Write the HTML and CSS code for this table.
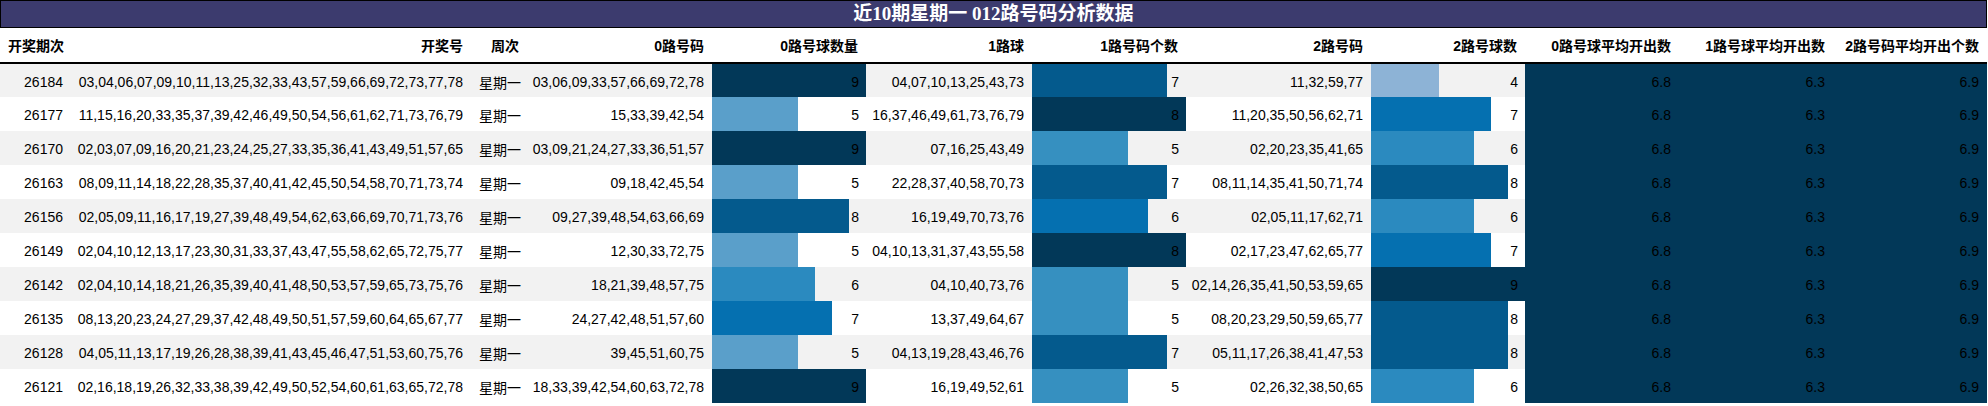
FILE: index.html
```html
<!DOCTYPE html>
<html lang="zh">
<head>
<meta charset="utf-8">
<title>近10期星期一 012路号码分析数据</title>
<link rel="stylesheet" href="styles.css">
</head>
<body>
<div class="sheet">
  <div class="title">近10期星期一 012路号码分析数据</div>
  <table class="data">
    <colgroup>
      <col class="w71"><col class="w400"><col class="w56"><col class="w185"><col class="w154"><col class="w166"><col class="w154"><col class="w185"><col class="w154"><col class="w154"><col class="w154"><col class="w154">
    </colgroup>
    <thead>
      <tr>
        <th class="left">开奖期次</th><th>开奖号</th><th>周次</th><th>0路号码</th><th>0路号球数量</th><th>1路球</th><th>1路号码个数</th><th>2路号码</th><th>2路号球数</th><th>0路号球平均开出数</th><th>1路号球平均开出数</th><th>2路号码平均开出个数</th>
      </tr>
    </thead>
    <tbody>
      <tr><td>26184</td><td>03,04,06,07,09,10,11,13,25,32,33,43,57,59,66,69,72,73,77,78</td><td class="left">星期一</td><td>03,06,09,33,57,66,69,72,78</td><td class="bar"><div class="fill a9" style="width:100%"></div><span>9</span></td><td>04,07,10,13,25,43,73</td><td class="bar"><div class="fill b7" style="width:87.5%"></div><span>7</span></td><td>11,32,59,77</td><td class="bar"><div class="fill c4" style="width:44.44%"></div><span>4</span></td><td class="avg">6.8</td><td class="avg">6.3</td><td class="avg">6.9</td></tr>
      <tr><td>26177</td><td>11,15,16,20,33,35,37,39,42,46,49,50,54,56,61,62,71,73,76,79</td><td class="left">星期一</td><td>15,33,39,42,54</td><td class="bar"><div class="fill a5" style="width:55.56%"></div><span>5</span></td><td>16,37,46,49,61,73,76,79</td><td class="bar"><div class="fill b8" style="width:100%"></div><span>8</span></td><td>11,20,35,50,56,62,71</td><td class="bar"><div class="fill c7" style="width:77.78%"></div><span>7</span></td><td class="avg">6.8</td><td class="avg">6.3</td><td class="avg">6.9</td></tr>
      <tr><td>26170</td><td>02,03,07,09,16,20,21,23,24,25,27,33,35,36,41,43,49,51,57,65</td><td class="left">星期一</td><td>03,09,21,24,27,33,36,51,57</td><td class="bar"><div class="fill a9" style="width:100%"></div><span>9</span></td><td>07,16,25,43,49</td><td class="bar"><div class="fill b5" style="width:62.5%"></div><span>5</span></td><td>02,20,23,35,41,65</td><td class="bar"><div class="fill c6" style="width:66.67%"></div><span>6</span></td><td class="avg">6.8</td><td class="avg">6.3</td><td class="avg">6.9</td></tr>
      <tr><td>26163</td><td>08,09,11,14,18,22,28,35,37,40,41,42,45,50,54,58,70,71,73,74</td><td class="left">星期一</td><td>09,18,42,45,54</td><td class="bar"><div class="fill a5" style="width:55.56%"></div><span>5</span></td><td>22,28,37,40,58,70,73</td><td class="bar"><div class="fill b7" style="width:87.5%"></div><span>7</span></td><td>08,11,14,35,41,50,71,74</td><td class="bar"><div class="fill c8" style="width:88.89%"></div><span>8</span></td><td class="avg">6.8</td><td class="avg">6.3</td><td class="avg">6.9</td></tr>
      <tr><td>26156</td><td>02,05,09,11,16,17,19,27,39,48,49,54,62,63,66,69,70,71,73,76</td><td class="left">星期一</td><td>09,27,39,48,54,63,66,69</td><td class="bar"><div class="fill a8" style="width:88.89%"></div><span>8</span></td><td>16,19,49,70,73,76</td><td class="bar"><div class="fill b6" style="width:75%"></div><span>6</span></td><td>02,05,11,17,62,71</td><td class="bar"><div class="fill c6" style="width:66.67%"></div><span>6</span></td><td class="avg">6.8</td><td class="avg">6.3</td><td class="avg">6.9</td></tr>
      <tr><td>26149</td><td>02,04,10,12,13,17,23,30,31,33,37,43,47,55,58,62,65,72,75,77</td><td class="left">星期一</td><td>12,30,33,72,75</td><td class="bar"><div class="fill a5" style="width:55.56%"></div><span>5</span></td><td>04,10,13,31,37,43,55,58</td><td class="bar"><div class="fill b8" style="width:100%"></div><span>8</span></td><td>02,17,23,47,62,65,77</td><td class="bar"><div class="fill c7" style="width:77.78%"></div><span>7</span></td><td class="avg">6.8</td><td class="avg">6.3</td><td class="avg">6.9</td></tr>
      <tr><td>26142</td><td>02,04,10,14,18,21,26,35,39,40,41,48,50,53,57,59,65,73,75,76</td><td class="left">星期一</td><td>18,21,39,48,57,75</td><td class="bar"><div class="fill a6" style="width:66.67%"></div><span>6</span></td><td>04,10,40,73,76</td><td class="bar"><div class="fill b5" style="width:62.5%"></div><span>5</span></td><td>02,14,26,35,41,50,53,59,65</td><td class="bar"><div class="fill c9" style="width:100%"></div><span>9</span></td><td class="avg">6.8</td><td class="avg">6.3</td><td class="avg">6.9</td></tr>
      <tr><td>26135</td><td>08,13,20,23,24,27,29,37,42,48,49,50,51,57,59,60,64,65,67,77</td><td class="left">星期一</td><td>24,27,42,48,51,57,60</td><td class="bar"><div class="fill a7" style="width:77.78%"></div><span>7</span></td><td>13,37,49,64,67</td><td class="bar"><div class="fill b5" style="width:62.5%"></div><span>5</span></td><td>08,20,23,29,50,59,65,77</td><td class="bar"><div class="fill c8" style="width:88.89%"></div><span>8</span></td><td class="avg">6.8</td><td class="avg">6.3</td><td class="avg">6.9</td></tr>
      <tr><td>26128</td><td>04,05,11,13,17,19,26,28,38,39,41,43,45,46,47,51,53,60,75,76</td><td class="left">星期一</td><td>39,45,51,60,75</td><td class="bar"><div class="fill a5" style="width:55.56%"></div><span>5</span></td><td>04,13,19,28,43,46,76</td><td class="bar"><div class="fill b7" style="width:87.5%"></div><span>7</span></td><td>05,11,17,26,38,41,47,53</td><td class="bar"><div class="fill c8" style="width:88.89%"></div><span>8</span></td><td class="avg">6.8</td><td class="avg">6.3</td><td class="avg">6.9</td></tr>
      <tr><td>26121</td><td>02,16,18,19,26,32,33,38,39,42,49,50,52,54,60,61,63,65,72,78</td><td class="left">星期一</td><td>18,33,39,42,54,60,63,72,78</td><td class="bar"><div class="fill a9" style="width:100%"></div><span>9</span></td><td>16,19,49,52,61</td><td class="bar"><div class="fill b5" style="width:62.5%"></div><span>5</span></td><td>02,26,32,38,50,65</td><td class="bar"><div class="fill c6" style="width:66.67%"></div><span>6</span></td><td class="avg">6.8</td><td class="avg">6.3</td><td class="avg">6.9</td></tr>
    </tbody>
  </table>
</div>
</body>
</html>
```
FILE: styles.css
```css
* { box-sizing: border-box; }
body {
  margin: 0;
  background: #ffffff;
  font-family: "Liberation Sans", "Noto Sans CJK SC", sans-serif;
  font-size: 14px;
  color: #000;
}
.sheet { width: 1987px; }
.title {
  height: 28px;
  background: #3c3b6e;
  border: 1px solid #000;
  color: #fff;
  font-family: "Liberation Serif", "Noto Sans CJK SC", serif;
  font-weight: bold;
  font-size: 19px;
  line-height: 25px;
  text-align: center;
}
.data {
  border-collapse: collapse;
  table-layout: fixed;
  width: 1987px;
}
.w71 { width: 71px; }
.w400 { width: 400px; }
.w56 { width: 56px; }
.w185 { width: 185px; }
.w154 { width: 154px; }
.w166 { width: 166px; }
.data th {
  height: 35px;
  padding: 0 8px 7px 0;
  font-weight: bold;
  font-size: 14px;
  text-align: right;
  vertical-align: bottom;
  white-space: nowrap;
  border-bottom: 2px solid #000;
}
.data th.left { text-align: left; padding-left: 8px; }
.data td {
  height: 34px;
  padding: 2px 8px 0 0;
  text-align: right;
  vertical-align: middle;
  white-space: nowrap;
}
.data td.left { text-align: left; padding-left: 8px; }
.data tbody tr:nth-child(odd) td { background: #f2f2f2; }
.data tbody tr:nth-child(even) td { background: #ffffff; }
.data td.bar { position: relative; padding-right: 7px; }
.data td.bar span { position: relative; }
.fill {
  position: absolute;
  left: 0;
  top: 0;
  bottom: 0;
}
.data tbody tr td.avg { background: #023858; }
.a9, .b8, .c9 { background: #023858; }
.a8, .b7, .c8 { background: #045a8d; }
.a7, .b6, .c7 { background: #0570b0; }
.a6, .c6 { background: #2b8abf; }
.b5 { background: #3690c0; }
.a5 { background: #5a9fca; }
.c4 { background: #8db3d6; }
```
